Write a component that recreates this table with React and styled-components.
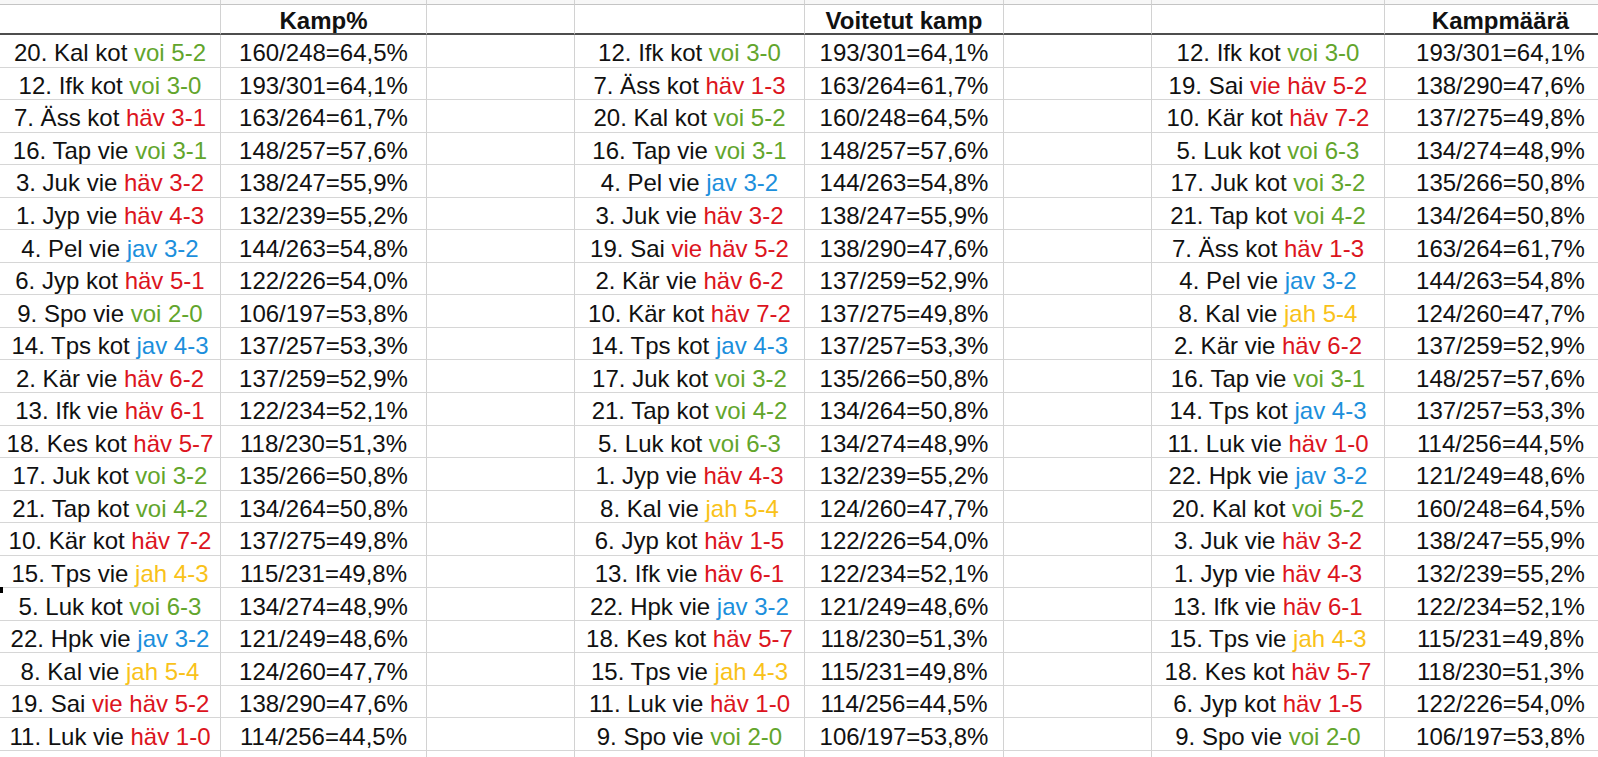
import React from 'react';
import styled, { createGlobalStyle } from 'styled-components';

const GlobalStyle = createGlobalStyle`
    html, body {
        margin: 0;
        padding: 0;
        background: #ffffff;
        overflow: hidden;
    }
    body {
        font-family: "Liberation Sans", Arial, sans-serif;
    }
`;

const COLORS = {
    voi: '#62a52c',
    häv: '#dc1420',
    jav: '#1c8fdc',
    jah: '#f9c21a',
};

// column widths of the sheet, last one runs out of the window
const Sheet = styled.div`
    position: relative;
    display: grid;
    grid-template-columns: 221px 206px 148px 230px 199px 148px 233px 232px;
    grid-template-rows: 5px 30px repeat(22, 32.55px) 20px;
    width: max-content;
    color: #111;
    font-size: 24px;
`;

const Cell = styled.div`
    box-sizing: border-box;
    display: flex;
    align-items: center;
    justify-content: center;
    white-space: nowrap;
    overflow: hidden;
    border-right: 1px solid #d2d2d2;
    border-bottom: ${(p) => (p.$head ? '2px solid #4d4d4d' : p.$strip ? '1px solid #c4c4c4' : '1px solid #d6d6d6')};
    background: ${(p) => (p.$strip ? '#f7f7f7' : '#ffffff')};
    font-weight: ${(p) => (p.$head ? 700 : 400)};
    padding-top: ${(p) => (p.$head ? '4px' : p.$strip ? '0' : '5px')};
`;

const Result = styled.span`
    color: ${(p) => p.$color};
`;

const Marker = styled.div`
    position: absolute;
    left: 0;
    top: 587px;
    width: 3px;
    height: 6px;
    background: #000;
`;

const groups = [
    {
        title: 'Kamp%',
        rows: [
            ['20. Kal kot', 'voi 5-2', '160/248=64,5%'],
            ['12. Ifk kot', 'voi 3-0', '193/301=64,1%'],
            ['7. Äss kot', 'häv 3-1', '163/264=61,7%'],
            ['16. Tap vie', 'voi 3-1', '148/257=57,6%'],
            ['3. Juk vie', 'häv 3-2', '138/247=55,9%'],
            ['1. Jyp vie', 'häv 4-3', '132/239=55,2%'],
            ['4. Pel vie', 'jav 3-2', '144/263=54,8%'],
            ['6. Jyp kot', 'häv 5-1', '122/226=54,0%'],
            ['9. Spo vie', 'voi 2-0', '106/197=53,8%'],
            ['14. Tps kot', 'jav 4-3', '137/257=53,3%'],
            ['2. Kär vie', 'häv 6-2', '137/259=52,9%'],
            ['13. Ifk vie', 'häv 6-1', '122/234=52,1%'],
            ['18. Kes kot', 'häv 5-7', '118/230=51,3%'],
            ['17. Juk kot', 'voi 3-2', '135/266=50,8%'],
            ['21. Tap kot', 'voi 4-2', '134/264=50,8%'],
            ['10. Kär kot', 'häv 7-2', '137/275=49,8%'],
            ['15. Tps vie', 'jah 4-3', '115/231=49,8%'],
            ['5. Luk kot', 'voi 6-3', '134/274=48,9%'],
            ['22. Hpk vie', 'jav 3-2', '121/249=48,6%'],
            ['8. Kal vie', 'jah 5-4', '124/260=47,7%'],
            ['19. Sai', 'vie häv 5-2', '138/290=47,6%'],
            ['11. Luk vie', 'häv 1-0', '114/256=44,5%'],
        ],
    },
    {
        title: 'Voitetut kamp',
        rows: [
            ['12. Ifk kot', 'voi 3-0', '193/301=64,1%'],
            ['7. Äss kot', 'häv 1-3', '163/264=61,7%'],
            ['20. Kal kot', 'voi 5-2', '160/248=64,5%'],
            ['16. Tap vie', 'voi 3-1', '148/257=57,6%'],
            ['4. Pel vie', 'jav 3-2', '144/263=54,8%'],
            ['3. Juk vie', 'häv 3-2', '138/247=55,9%'],
            ['19. Sai', 'vie häv 5-2', '138/290=47,6%'],
            ['2. Kär vie', 'häv 6-2', '137/259=52,9%'],
            ['10. Kär kot', 'häv 7-2', '137/275=49,8%'],
            ['14. Tps kot', 'jav 4-3', '137/257=53,3%'],
            ['17. Juk kot', 'voi 3-2', '135/266=50,8%'],
            ['21. Tap kot', 'voi 4-2', '134/264=50,8%'],
            ['5. Luk kot', 'voi 6-3', '134/274=48,9%'],
            ['1. Jyp vie', 'häv 4-3', '132/239=55,2%'],
            ['8. Kal vie', 'jah 5-4', '124/260=47,7%'],
            ['6. Jyp kot', 'häv 1-5', '122/226=54,0%'],
            ['13. Ifk vie', 'häv 6-1', '122/234=52,1%'],
            ['22. Hpk vie', 'jav 3-2', '121/249=48,6%'],
            ['18. Kes kot', 'häv 5-7', '118/230=51,3%'],
            ['15. Tps vie', 'jah 4-3', '115/231=49,8%'],
            ['11. Luk vie', 'häv 1-0', '114/256=44,5%'],
            ['9. Spo vie', 'voi 2-0', '106/197=53,8%'],
        ],
    },
    {
        title: 'Kampmäärä',
        rows: [
            ['12. Ifk kot', 'voi 3-0', '193/301=64,1%'],
            ['19. Sai', 'vie häv 5-2', '138/290=47,6%'],
            ['10. Kär kot', 'häv 7-2', '137/275=49,8%'],
            ['5. Luk kot', 'voi 6-3', '134/274=48,9%'],
            ['17. Juk kot', 'voi 3-2', '135/266=50,8%'],
            ['21. Tap kot', 'voi 4-2', '134/264=50,8%'],
            ['7. Äss kot', 'häv 1-3', '163/264=61,7%'],
            ['4. Pel vie', 'jav 3-2', '144/263=54,8%'],
            ['8. Kal vie', 'jah 5-4', '124/260=47,7%'],
            ['2. Kär vie', 'häv 6-2', '137/259=52,9%'],
            ['16. Tap vie', 'voi 3-1', '148/257=57,6%'],
            ['14. Tps kot', 'jav 4-3', '137/257=53,3%'],
            ['11. Luk vie', 'häv 1-0', '114/256=44,5%'],
            ['22. Hpk vie', 'jav 3-2', '121/249=48,6%'],
            ['20. Kal kot', 'voi 5-2', '160/248=64,5%'],
            ['3. Juk vie', 'häv 3-2', '138/247=55,9%'],
            ['1. Jyp vie', 'häv 4-3', '132/239=55,2%'],
            ['13. Ifk vie', 'häv 6-1', '122/234=52,1%'],
            ['15. Tps vie', 'jah 4-3', '115/231=49,8%'],
            ['18. Kes kot', 'häv 5-7', '118/230=51,3%'],
            ['6. Jyp kot', 'häv 1-5', '122/226=54,0%'],
            ['9. Spo vie', 'voi 2-0', '106/197=53,8%'],
        ],
    },
];

const resultColor = (res) => {
    const key = Object.keys(COLORS).find((k) => res.includes(k));
    return COLORS[key] || '#111';
};

const TeamCell = ({ team, res }) => (
    <Cell>
        {team}&nbsp;<Result $color={resultColor(res)}>{res}</Result>
    </Cell>
);

const App = () => {
    const cells = [];

    // thin strip of the row above the header
    for (let c = 0; c < 8; c++) cells.push(<Cell key={`s${c}`} $strip />);

    groups.forEach((g, gi) => {
        cells.push(<Cell key={`h${gi}a`} $head />);
        cells.push(<Cell key={`h${gi}b`} $head>{g.title}</Cell>);
        if (gi < 2) cells.push(<Cell key={`h${gi}c`} $head />);
    });

    for (let r = 0; r < 22; r++) {
        groups.forEach((g, gi) => {
            const [team, res, val] = g.rows[r];
            cells.push(<TeamCell key={`r${r}g${gi}t`} team={team} res={res} />);
            cells.push(<Cell key={`r${r}g${gi}v`}>{val}</Cell>);
            if (gi < 2) cells.push(<Cell key={`r${r}g${gi}e`} />);
        });
    }

    for (let c = 0; c < 8; c++) cells.push(<Cell key={`e${c}`} />);

    return (
        <>
            <GlobalStyle />
            <Sheet>
                {cells}
                <Marker />
            </Sheet>
        </>
    );
};

export default App;
